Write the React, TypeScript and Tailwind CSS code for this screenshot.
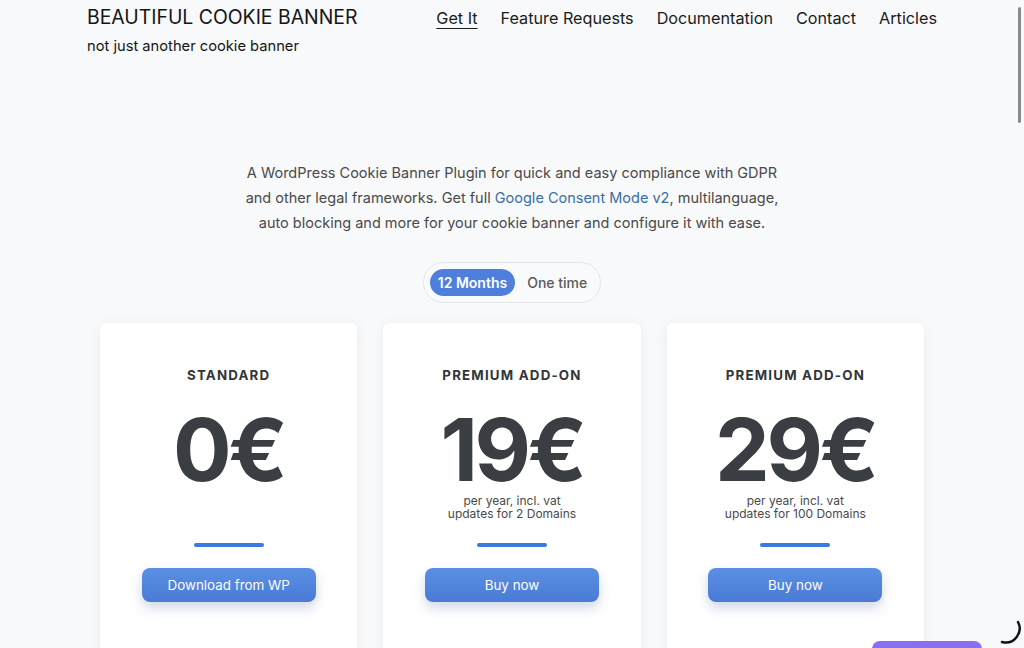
import React from "react";

const plans = [
  { title: "STANDARD", price: "0€", lines: [] as string[], cta: "Download from WP" },
  { title: "PREMIUM ADD-ON", price: "19€", lines: ["per year, incl. vat", "updates for 2 Domains"], cta: "Buy now" },
  { title: "PREMIUM ADD-ON", price: "29€", lines: ["per year, incl. vat", "updates for 100 Domains"], cta: "Buy now" },
];

export default function App() {
  return (
    <div
      className="relative h-[648px] w-[1024px] overflow-hidden bg-[#f8f9fb] text-[#1d1d1f]"
      style={{ fontFamily: "Inter, 'Noto Sans', sans-serif" }}
    >
      {/* header */}
      <header className="mx-auto flex w-[850px] items-start justify-between">
        <div className="pt-[5px]">
          <div className="text-[19.4px] leading-[24px] text-[#151515]">BEAUTIFUL COOKIE BANNER</div>
          <div className="mt-[7px] text-[14.7px] leading-[20px] text-[#151515]">not just another cookie banner</div>
        </div>
        <nav className="flex gap-[23px] pt-[7px] text-[16.2px] leading-[22px] text-[#1b1b1b]">
          <a className="underline decoration-1 underline-offset-[4px]">Get It</a>
          <a>Feature Requests</a>
          <a>Documentation</a>
          <a>Contact</a>
          <a>Articles</a>
        </nav>
      </header>

      {/* intro */}
      <p className="mx-auto mt-[104px] w-[560px] text-center text-[14.5px] leading-[25px] text-[#4a4a4a]">
        A WordPress Cookie Banner Plugin for quick and easy compliance with GDPR and other legal frameworks. Get full{" "}
        <span className="text-[#3a6ea8]">Google Consent Mode v2</span>, multilanguage, auto blocking and more for your
        cookie banner and configure it with ease.
      </p>

      {/* toggle */}
      <div className="mt-[27px] flex justify-center">
        <div className="flex items-center rounded-full border border-[#e3e5e8] bg-[#f9fafb] p-[6px] pr-[13px]">
          <div className="rounded-full bg-[#4f7fdc] px-[8px] py-[4px] text-[14px] font-semibold leading-[19px] text-white">
            12 Months
          </div>
          <div className="pl-[12px] text-[14px] font-medium leading-[19px] text-[#5a5a5a]">One time</div>
        </div>
      </div>

      {/* cards */}
      <div className="mx-auto mt-[20px] grid w-[824px] grid-cols-3 gap-[26px]">
        {plans.map((p, i) => (
          <div
            key={i}
            className="flex h-[360px] flex-col items-center rounded-[6px] bg-white pt-[42px] shadow-[0_2px_14px_rgba(0,0,0,0.06)]"
          >
            <div className="h-5 text-[13.3px] font-bold leading-5 tracking-[0.09em] text-[#333538]">{p.title}</div>
            <div className="mt-[21px] h-[88px] text-[87px] font-bold leading-[88px] tracking-[-0.04em] text-[#3a3d41]">
              {p.price}
            </div>
            <div className="h-[26px] text-center text-[12px] leading-[13px] text-[#4a4a4a]">
              {p.lines.map((l) => (
                <div key={l}>{l}</div>
              ))}
            </div>
            <div className="mt-[23px] h-[4px] w-[70px] rounded-full bg-[#3b7ae0]" />
            <button className="mt-[21px] h-[34px] w-[174px] rounded-[8px] bg-gradient-to-b from-[#5b8fe3] to-[#4a7bd6] text-[13.4px] leading-[35px] text-white shadow-[0_6px_12px_rgba(50,80,140,0.22)]">
              {p.cta}
            </button>
          </div>
        ))}
      </div>

      {/* overlay scrollbar */}
      <div className="absolute right-[3px] top-[7px] h-[116px] w-[3px] rounded-full bg-[#8a8a8a]" />

      {/* bottom right widget */}
      <div className="absolute left-[872px] top-[641px] h-[20px] w-[110px] rounded-t-[8px] bg-[#8b6ff2]" />
      <svg className="absolute left-[998px] top-[618px]" width="26" height="28" viewBox="0 0 26 28">
        <path d="M20 4 A 14 14 0 0 1 4 24" fill="none" stroke="#111" strokeWidth="2.5" strokeLinecap="round" />
      </svg>
    </div>
  );
}
